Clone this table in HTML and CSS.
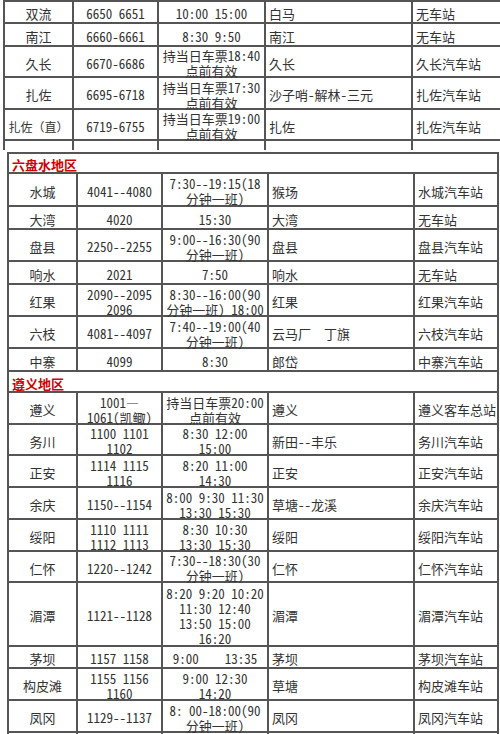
FILE: index.html
```html
<!DOCTYPE html>
<html lang="zh-CN">
<head>
<meta charset="utf-8">
<title>班车时刻表</title>
<link rel="stylesheet" href="styles.css">
</head>
<body>
<div class="sheet sheet-top">
<table class="grid grid-top">
<colgroup><col class="w1a"><col class="w2a"><col class="w3a"><col class="w4a"><col class="w5a"></colgroup>
<tr class="p22"><td><div class="c">双流</div></td><td><div class="c">6650 6651</div></td><td><div class="c">10:00 15:00</div></td><td class="l"><div class="c">白马</div></td><td class="l"><div class="c">无车站</div></td></tr>
<tr class="p23"><td><div class="c">南江</div></td><td><div class="c">6660-6661</div></td><td><div class="c">8:30 9:50</div></td><td class="l"><div class="c">南江</div></td><td class="l"><div class="c">无车站</div></td></tr>
<tr class="p31"><td><div class="c">久长</div></td><td><div class="c">6670-6686</div></td><td><div class="c">持当日车票18:40<br>点前有效</div></td><td class="l"><div class="c">久长</div></td><td class="l"><div class="c">久长汽车站</div></td></tr>
<tr class="p32"><td><div class="c">扎佐</div></td><td><div class="c">6695-6718</div></td><td><div class="c">持当日车票17:30<br>点前有效</div></td><td class="l"><div class="c">沙子哨-解林-三元</div></td><td class="l"><div class="c">扎佐汽车站</div></td></tr>
<tr class="p31"><td><div class="c fw">扎佐（直）</div></td><td><div class="c">6719-6755</div></td><td><div class="c">持当日车票19:00<br>点前有效</div></td><td class="l"><div class="c">扎佐</div></td><td class="l"><div class="c">扎佐汽车站</div></td></tr>
<tr class="p32"><td><div class="c"></div></td><td><div class="c"></div></td><td><div class="c"></div></td><td class="l"><div class="c"></div></td><td class="l"><div class="c"></div></td></tr>
</table>
</div>
<div class="sheet sheet-bottom">
<table class="grid grid-bottom">
<colgroup><col class="w1b"><col class="w2b"><col class="w3b"><col class="w4b"><col class="w5b"></colgroup>
<tr class="p20 region"><td colspan="5" class="l"><div class="c">六盘水地区</div></td></tr>
<tr class="p33"><td><div class="c">水城</div></td><td><div class="c">4041--4080</div></td><td><div class="c">7:30--19:15(18<br>分钟一班)</div></td><td class="l"><div class="c">猴场</div></td><td class="l"><div class="c">水城汽车站</div></td></tr>
<tr class="p23"><td><div class="c">大湾</div></td><td><div class="c">4020</div></td><td><div class="c">15:30</div></td><td class="l"><div class="c">大湾</div></td><td class="l"><div class="c">无车站</div></td></tr>
<tr class="p32"><td><div class="c">盘县</div></td><td><div class="c">2250--2255</div></td><td><div class="c">9:00--16:30(90<br>分钟一班)</div></td><td class="l"><div class="c">盘县</div></td><td class="l"><div class="c">盘县汽车站</div></td></tr>
<tr class="p23"><td><div class="c">响水</div></td><td><div class="c">2021</div></td><td><div class="c">7:50</div></td><td class="l"><div class="c">响水</div></td><td class="l"><div class="c">无车站</div></td></tr>
<tr class="p32"><td><div class="c">红果</div></td><td><div class="c">2090--2095<br>2096</div></td><td><div class="c">8:30--16:00(90<br>分钟一班) 18:00</div></td><td class="l"><div class="c">红果</div></td><td class="l"><div class="c">红果汽车站</div></td></tr>
<tr class="p32"><td><div class="c">六枝</div></td><td><div class="c">4081--4097</div></td><td><div class="c">7:40--19:00(40<br>分钟一班)</div></td><td class="l"><div class="c pre">云马厂  丁旗</div></td><td class="l"><div class="c">六枝汽车站</div></td></tr>
<tr class="p23"><td><div class="c">中寨</div></td><td><div class="c">4099</div></td><td><div class="c">8:30</div></td><td class="l"><div class="c">郎岱</div></td><td class="l"><div class="c">中寨汽车站</div></td></tr>
<tr class="p21 region"><td colspan="5" class="l"><div class="c">遵义地区</div></td></tr>
<tr class="p32"><td><div class="c">遵义</div></td><td><div class="c">1001—<br>1061(凯鲰)</div></td><td><div class="c">持当日车票20:00<br>点前有效</div></td><td class="l"><div class="c">遵义</div></td><td class="l"><div class="c">遵义客车总站</div></td></tr>
<tr class="p31"><td><div class="c">务川</div></td><td><div class="c">1100 1101<br>1102</div></td><td><div class="c">8:30 12:00<br>15:00</div></td><td class="l"><div class="c">新田--丰乐</div></td><td class="l"><div class="c">务川汽车站</div></td></tr>
<tr class="p32"><td><div class="c">正安</div></td><td><div class="c">1114 1115<br>1116</div></td><td><div class="c">8:20 11:00<br>14:30</div></td><td class="l"><div class="c">正安</div></td><td class="l"><div class="c">正安汽车站</div></td></tr>
<tr class="p32"><td><div class="c">余庆</div></td><td><div class="c">1150--1154</div></td><td><div class="c">8:00 9:30 11:30<br>13:30 15:30</div></td><td class="l"><div class="c">草塘--龙溪</div></td><td class="l"><div class="c">余庆汽车站</div></td></tr>
<tr class="p32"><td><div class="c">绥阳</div></td><td><div class="c">1110 1111<br>1112 1113</div></td><td><div class="c">8:30 10:30<br>13:30 15:30</div></td><td class="l"><div class="c">绥阳</div></td><td class="l"><div class="c">绥阳汽车站</div></td></tr>
<tr class="p31"><td><div class="c">仁怀</div></td><td><div class="c">1220--1242</div></td><td><div class="c">7:30--18:30(30<br>分钟一班)</div></td><td class="l"><div class="c">仁怀</div></td><td class="l"><div class="c">仁怀汽车站</div></td></tr>
<tr class="p64"><td><div class="c">湄潭</div></td><td><div class="c">1121--1128</div></td><td><div class="c">8:20 9:20 10:20<br>11:30 12:40<br>13:50 15:00<br>16:20</div></td><td class="l"><div class="c">湄潭</div></td><td class="l"><div class="c">湄潭汽车站</div></td></tr>
<tr class="p22"><td><div class="c">茅坝</div></td><td><div class="c">1157 1158</div></td><td><div class="c pre">9:00    13:35</div></td><td class="l"><div class="c">茅坝</div></td><td class="l"><div class="c">茅坝汽车站</div></td></tr>
<tr class="p32"><td><div class="c">构皮滩</div></td><td><div class="c">1155 1156<br>1160</div></td><td><div class="c">9:00 12:30<br>14:20</div></td><td class="l"><div class="c">草塘</div></td><td class="l"><div class="c">构皮滩车站</div></td></tr>
<tr class="p32"><td><div class="c">凤冈</div></td><td><div class="c">1129--1137</div></td><td><div class="c">8: 00-18:00(90<br>分钟一班)</div></td><td class="l"><div class="c">凤冈</div></td><td class="l"><div class="c">凤冈汽车站</div></td></tr>
<tr class="p32"><td><div class="c"></div></td><td><div class="c"></div></td><td><div class="c"></div></td><td class="l"><div class="c"></div></td><td class="l"><div class="c"></div></td></tr>
</table>
</div>
</body>
</html>
```

FILE: styles.css
```css
html, body {
  margin: 0;
  padding: 0;
  background: #fff;
  overflow: hidden;
}
body {
  width: 500px;
  height: 734px;
  font-family: "Noto Sans CJK SC", sans-serif;
  font-size: 13px;
  color: #333;
  font-feature-settings: "hwid" 1;
}
.sheet-top {
  height: 150px;
  overflow: hidden;
  margin-left: 3px;
}
.sheet-bottom {
  margin-top: 2px;
  margin-left: 7px;
}
.grid {
  border-collapse: collapse;
  table-layout: fixed;
}
.grid-top { width: 500px; }
.grid-bottom { width: 492px; }
.w1a { width: 69px; }
.w2a { width: 85px; }
.w3a { width: 107px; }
.w4a { width: 147px; }
.w5a { width: 90px; }
.w1b { width: 69px; }
.w2b { width: 85px; }
.w3b { width: 106px; }
.w4b { width: 146px; }
.w5b { width: 84px; }
.grid td {
  border: 2px solid #555;
  padding: 0;
  vertical-align: top;
}
.c {
  display: flex;
  flex-direction: column;
  justify-content: center;
  box-sizing: border-box;
  padding-top: 3px;
  line-height: 15px;
  white-space: nowrap;
  text-align: center;
}
.fw {
  font-feature-settings: normal;
  font-size: 12px;
}
.pre { white-space: pre; }
.l .c {
  text-align: left;
  padding-left: 3px;
}
.region .c {
  color: #d00000;
  font-weight: 700;
}
.p20 .c { height: 18px; }
.p21 .c { height: 19px; }
.p22 .c { height: 20px; }
.p23 .c { height: 21px; }
.p31 .c { height: 29px; }
.p32 .c { height: 30px; }
.p33 .c { height: 31px; }
.p64 .c { height: 62px; }
```
